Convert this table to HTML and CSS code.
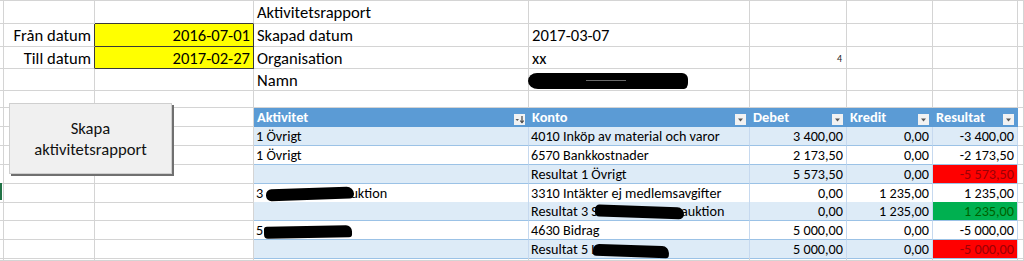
FILE: index.html
```html
<!DOCTYPE html>
<html lang="sv">
<head>
<meta charset="utf-8">
<title>Aktivitetsrapport</title>
<link rel="stylesheet" href="styles.css">
</head>
<body>
<div class="sheet">
  <div class="row r1">
    <div></div><div></div><div class="ybt"></div><div class="big">Aktivitetsrapport</div><div></div><div></div><div></div><div></div><div></div>
  </div>
  <div class="row r2">
    <div></div><div class="big right ydl">Från datum</div><div class="big right yellow">2016-07-01</div><div class="big">Skapad datum</div><div class="big">2017-03-07</div><div></div><div></div><div></div><div></div>
  </div>
  <div class="row r3">
    <div></div><div class="big right ydl">Till datum</div><div class="big right yellow">2017-02-27</div><div class="big">Organisation</div><div class="big">xx</div><div class="small right">4</div><div></div><div></div><div></div>
  </div>
  <div class="row r4">
    <div></div><div></div><div></div><div class="big">Namn</div><div class="big"><span class="blob b-namn"></span></div><div></div><div></div><div></div><div></div>
  </div>
  <div class="row r5">
    <div></div><div></div><div></div><div></div><div></div><div></div><div></div><div></div><div></div>
  </div>
  <div class="row rh">
    <div></div><div></div><div></div>
    <div class="th">Aktivitet<svg class="dd" viewBox="0 0 11 11"><rect width="11" height="11" fill="#f2f2f2"/><polygon points="1.5,5 5,5 3.25,7" fill="#555"/><line x1="8" y1="2" x2="8" y2="8.5" stroke="#444" stroke-width="1.2"/><polyline points="6.3,6.6 8,8.6 9.7,6.6" fill="none" stroke="#444" stroke-width="1.1"/></svg></div>
    <div class="th">Konto<svg class="dd" viewBox="0 0 11 11"><rect width="11" height="11" fill="#f2f2f2"/><polygon points="3,4.5 8,4.5 5.5,7.5" fill="#555"/></svg></div>
    <div class="th">Debet<svg class="dd" viewBox="0 0 11 11"><rect width="11" height="11" fill="#f2f2f2"/><polygon points="3,4.5 8,4.5 5.5,7.5" fill="#555"/></svg></div>
    <div class="th">Kredit<svg class="dd" viewBox="0 0 11 11"><rect width="11" height="11" fill="#f2f2f2"/><polygon points="3,4.5 8,4.5 5.5,7.5" fill="#555"/></svg></div>
    <div class="th">Resultat<svg class="dd" viewBox="0 0 11 11"><rect width="11" height="11" fill="#f2f2f2"/><polygon points="3,4.5 8,4.5 5.5,7.5" fill="#555"/></svg></div>
    <div></div>
  </div>
  <div class="row tr h19 band">
    <div></div><div></div><div></div><div class="td">1 Övrigt</div><div class="td">4010 Inköp av material och varor</div><div class="td num">3 400,00</div><div class="td num">0,00</div><div class="td num">-3 400,00</div><div></div>
  </div>
  <div class="row tr h19">
    <div></div><div></div><div></div><div class="td">1 Övrigt</div><div class="td">6570 Bankkostnader</div><div class="td num">2 173,50</div><div class="td num">0,00</div><div class="td num">-2 173,50</div><div></div>
  </div>
  <div class="row tr h19 band">
    <div></div><div></div><div></div><div class="td"></div><div class="td">Resultat 1 Övrigt</div><div class="td num">5 573,50</div><div class="td num">0,00</div><div class="td num neg">-5 573,50</div><div></div>
  </div>
  <div class="row tr h18">
    <div></div><div></div><div></div><div class="td">3&nbsp;<span class="blob b-akt3"></span>uktion</div><div class="td">3310 Intäkter ej medlemsavgifter</div><div class="td num">0,00</div><div class="td num">1 235,00</div><div class="td num">1 235,00</div><div></div>
  </div>
  <div class="row tr h19 band">
    <div></div><div></div><div></div><div class="td"></div><div class="td">Resultat 3 S<span class="blob b-res3"></span>auktion</div><div class="td num">0,00</div><div class="td num">1 235,00</div><div class="td num pos">1 235,00</div><div></div>
  </div>
  <div class="row tr h19">
    <div></div><div></div><div></div><div class="td">5<span class="blob b-akt5"></span></div><div class="td">4630 Bidrag</div><div class="td num">5 000,00</div><div class="td num">0,00</div><div class="td num">-5 000,00</div><div></div>
  </div>
  <div class="row tr h18 band">
    <div></div><div></div><div></div><div class="td"></div><div class="td">Resultat 5 L<span class="blob b-res5"></span></div><div class="td num">5 000,00</div><div class="td num">0,00</div><div class="td num neg">-5 000,00</div><div></div>
  </div>
  <div class="row rlast">
    <div></div><div></div><div></div><div></div><div></div><div></div><div></div><div></div><div></div>
  </div>

  <div class="button">Skapa<br>aktivitetsrapport</div>
  <div class="rowmark"></div>
</div>
</body>
</html>
```
FILE: styles.css
```css
* { box-sizing: border-box; margin: 0; padding: 0; }

body {
  margin: 0;
  width: 1024px;
  height: 261px;
  overflow: hidden;
  background: #ffffff;
  color: #000000;
  font-family: Carlito, Lato, "Liberation Sans", sans-serif;
}

.sheet {
  position: relative;
  height: 261px;
  overflow: hidden;
  padding-top: 1px;
  background: linear-gradient(#d4d4d4, #d4d4d4) top left / 100% 1px no-repeat;
}

.row {
  display: grid;
  grid-template-columns: 4px 91px 159px 275px 221px 97px 86px 85px 1fr;
}

.row > div {
  border-right: 1px solid #d4d4d4;
  border-bottom: 1px solid #d4d4d4;
  display: flex;
  align-items: center;
  white-space: nowrap;
  min-width: 0;
}

.r1 { height: 23px; }
.r2 { height: 23px; }
.r3 { height: 22px; }
.r4 { height: 22px; }
.r5 { height: 17px; }
.rh { height: 19px; }
.h19 { height: 19px; }
.h18 { height: 18px; }
.rlast { height: 3px; }

.big {
  font-size: 16.6px;
  padding-left: 3px;
}

.right {
  justify-content: flex-end;
  padding: 0 3px 0 0;
}

.small {
  font-size: 10px;
  color: #222;
  padding-right: 4px;
  padding-top: 2px;
}

.row > .yellow {
  background: #ffff00;
  border-right-color: #3a3a3a;
  border-bottom-color: #3a3a3a;
}

.row > .ydl { border-right-color: #3a3a3a; }
.row > .ybt { border-bottom-color: #3a3a3a; }

/* table header */
.row > .th {
  background: #5b9bd5;
  border-right-color: #5b9bd5;
  border-bottom-color: #5b9bd5;
  color: #ffffff;
  font-weight: bold;
  font-size: 14.4px;
  padding: 0 3px 0 3px;
  justify-content: space-between;
}

.dd {
  width: 11px;
  height: 11px;
  align-self: flex-end;
  margin-bottom: 1px;
  flex: none;
}

/* table body */
.row > .td {
  font-size: 14.2px;
  padding-left: 2px;
  border-right-color: #c6d9ef;
  border-bottom-color: #9bc2e6;
}

.band > .td { background: #ddebf7; }

.row > .num {
  justify-content: flex-end;
  padding: 0 3px 0 0;
}

.row > .neg {
  background: #ff0000;
  color: #9c0006;
}

.row > .pos {
  background: #00b050;
  color: #006100;
}

/* redaction scribbles */
.blob {
  display: inline-block;
  background: #000;
  flex: none;
}

.b-namn {
  width: 160px;
  height: 16px;
  margin-left: -4px;
  margin-top: 2px;
  border-radius: 9px 6px 4px 10px / 8px 6px 6px 8px;
  position: relative;
}

.b-namn::after {
  content: "";
  position: absolute;
  left: 58px;
  top: 7px;
  width: 40px;
  height: 1px;
  background: #6a6a6a;
}

.b-akt3 {
  width: 88px;
  height: 12px;
  margin: 2px -4px 0 0;
  border-radius: 6px 8px 5px 6px;
  transform: rotate(-2deg);
}

.b-res3 {
  width: 89px;
  height: 12px;
  margin: 2px -3px 0 -3px;
  border-radius: 5px 8px 6px 5px;
  transform: rotate(2deg);
}

.b-akt5 {
  width: 88px;
  height: 12px;
  margin: 3px 0 0 1px;
  border-radius: 3px 6px 3px 4px;
  transform: rotate(-1deg);
}

.b-res5 {
  width: 76px;
  height: 12px;
  margin: 3px 0 0 -4px;
  border-radius: 6px 7px 3px 3px;
  transform: rotate(2deg);
}

/* floating form button */
.button {
  position: absolute;
  left: 9px;
  top: 103px;
  width: 163px;
  height: 71px;
  background: #f0f0f0;
  border: 1px solid #cfcfcf;
  box-shadow: 2px 2px 0 #707070;
  display: flex;
  align-items: center;
  justify-content: center;
  text-align: center;
  font-size: 16.6px;
  line-height: 21px;
  color: #111;
}

.rowmark {
  position: absolute;
  left: 0;
  top: 183px;
  width: 2px;
  height: 17px;
  background: #217346;
}
```
